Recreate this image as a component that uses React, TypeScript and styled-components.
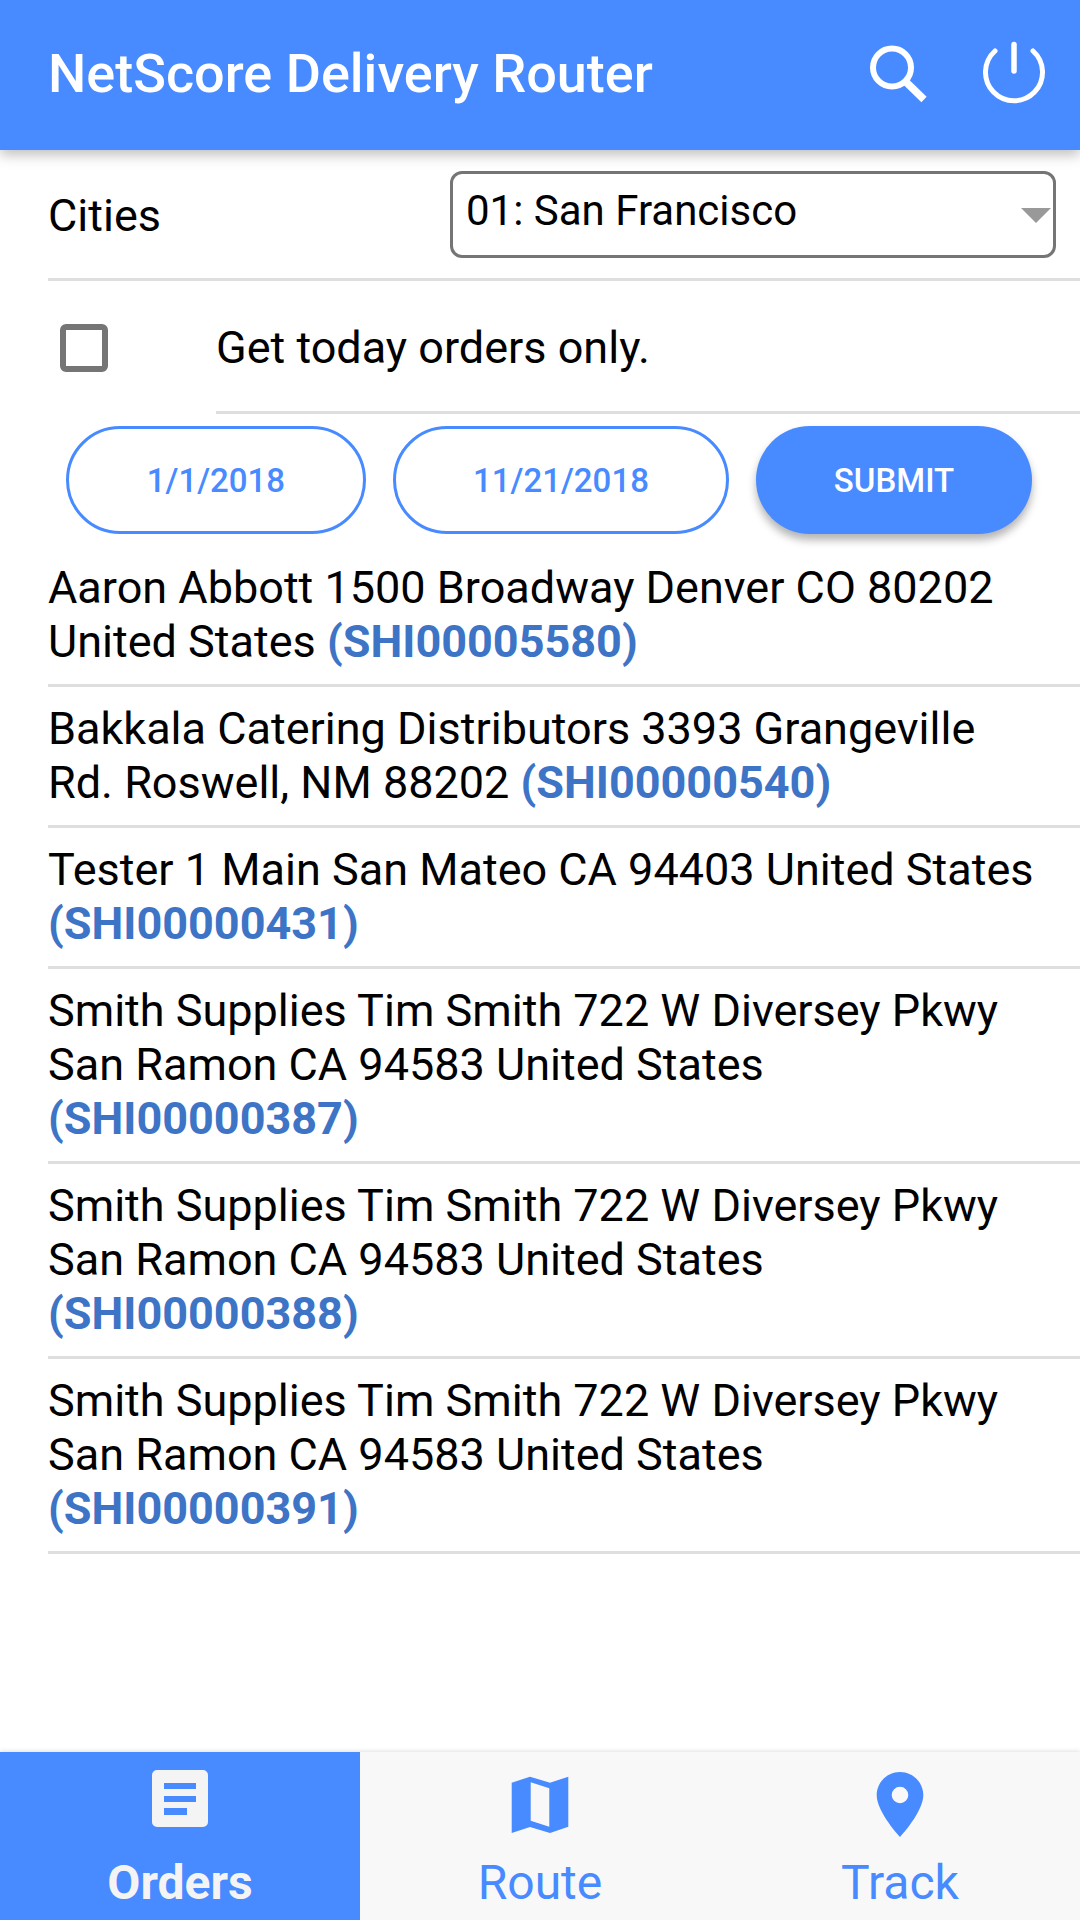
import React from 'react';
import styled, { createGlobalStyle } from 'styled-components';

const GlobalStyle = createGlobalStyle`
  html, body {
    margin: 0;
    padding: 0;
    background: #fff;
  }
  * {
    box-sizing: border-box;
  }
`;

const BLUE = '#488aff';

const Page = styled.div`
  width: 1080px;
  height: 1920px;
  display: flex;
  flex-direction: column;
  font-family: Roboto, 'Liberation Sans', sans-serif;
  font-size: 45px;
  color: #000;
  overflow: hidden;
`;

const Header = styled.header`
  height: 150px;
  flex: none;
  background: ${BLUE};
  color: #fff;
  display: flex;
  align-items: center;
  padding: 0 33px 0 48px;
  box-shadow: 0 5px 12px rgba(0, 0, 0, 0.25);
  position: relative;
  z-index: 1;
`;

const Title = styled.h1`
  flex: 1;
  margin: 0 0 3px;
  font-size: 54px;
  font-weight: 500;
`;

const HeaderIcons = styled.div`
  display: flex;
  align-items: center;
  gap: 51px;
  margin-bottom: 4px;
`;

const IconLine = styled.svg`
  fill: none;
  stroke: currentColor;
`;

const Content = styled.main`
  flex: 1;
  min-height: 0;
`;

const CityRow = styled.div`
  height: 131px;
  margin-left: 48px;
  border-bottom: 3px solid #dedede;
  display: flex;
  align-items: center;
  justify-content: space-between;
  padding: 0 24px 0 0;
`;

const CityLabel = styled.span`
  margin-top: 3px;
`;

const Select = styled.div`
  width: 606px;
  height: 87px;
  border: 3px solid #757575;
  border-radius: 12px;
  padding: 0 13px 8px;
  font-size: 42px;
  display: flex;
  align-items: center;
  justify-content: space-between;
`;

const Caret = styled.span`
  width: 0;
  height: 0;
  border-left: 15px solid transparent;
  border-right: 15px solid transparent;
  border-top: 15px solid #999;
  margin: 10px -11px 0 0;
`;

const CheckRow = styled.div`
  height: 133px;
  display: flex;
  padding-left: 60px;
`;

const CheckBox = styled.span`
  width: 48px;
  height: 48px;
  flex: none;
  border: 6px solid #757575;
  border-radius: 6px;
  margin-top: 43px;
`;

const CheckLabel = styled.div`
  flex: 1;
  margin-left: 108px;
  border-bottom: 3px solid #dedede;
  padding-top: 40px;
`;

const Buttons = styled.div`
  display: flex;
  gap: 27px;
  padding: 12px 0 0 66px;
  height: 132px;
`;

const DateButton = styled.button<{ $width: number }>`
  width: ${(p) => p.$width}px;
  height: 108px;
  border: 3px solid ${BLUE};
  border-radius: 54px;
  background: #fff;
  color: ${BLUE};
  font-family: inherit;
  font-size: 33px;
  font-weight: 500;
  padding: 0;
`;

const SubmitButton = styled(DateButton)`
  border: none;
  background: ${BLUE};
  color: #fff;
  box-shadow: 0 6px 9px rgba(0, 0, 0, 0.3);
`;

const OrderList = styled.ul`
  list-style: none;
  margin: 0;
  padding: 0 0 0 48px;
`;

const OrderRow = styled.li`
  padding: 15px 45px 15px 0;
  line-height: 54px;
  border-bottom: 3px solid #dedede;
`;

const ShipId = styled.b`
  color: #3d74c6;
  font-weight: 700;
`;

const TabBar = styled.nav`
  height: 168px;
  flex: none;
  display: flex;
  background: #f8f8f8;
  box-shadow: 0 -1px 4px rgba(0, 0, 0, 0.12);
`;

const Tab = styled.div<{ $active?: boolean }>`
  width: 360px;
  display: flex;
  flex-direction: column;
  align-items: center;
  font-size: 48px;
  background: ${(p) => (p.$active ? BLUE : 'transparent')};
  color: ${(p) => (p.$active ? '#f4f4f4' : BLUE)};
  font-weight: ${(p) => (p.$active ? 700 : 400)};
`;

const TabIcon = styled.svg`
  width: 72px;
  height: 72px;
  margin-top: 10px;
  fill: currentColor;
  overflow: visible;
`;

const TabLabel = styled.span`
  margin-top: 21px;
  line-height: 56px;
`;

const orders = [
  { text: 'Aaron Abbott 1500 Broadway Denver CO 80202 United States', id: 'SHI00005580' },
  { text: 'Bakkala Catering Distributors 3393 Grangeville Rd. Roswell, NM 88202', id: 'SHI00000540' },
  { text: 'Tester 1 Main San Mateo CA 94403 United States', id: 'SHI00000431' },
  { text: 'Smith Supplies Tim Smith 722 W Diversey Pkwy San Ramon CA 94583 United States', id: 'SHI00000387' },
  { text: 'Smith Supplies Tim Smith 722 W Diversey Pkwy San Ramon CA 94583 United States', id: 'SHI00000388' },
  { text: 'Smith Supplies Tim Smith 722 W Diversey Pkwy San Ramon CA 94583 United States', id: 'SHI00000391' },
];

export default function App(): JSX.Element {
  return (
    <Page>
      <GlobalStyle />
      <Header>
        <Title>NetScore Delivery Router</Title>
        <HeaderIcons>
          <IconLine width={60} height={60} viewBox='0 0 60 60'>
            <circle cx='22' cy='24.5' r='19' strokeWidth='6' />
            <path d='M35 38 L54 56.500' strokeWidth='7.500' />
          </IconLine>
          <IconLine width={66} height={66} viewBox='0 0 66 66' strokeLinecap='round'>
            <path d='M14 11 A28.500 28.500 0 1 0 52 11' strokeWidth='5' />
            <path d='M33 4.500 V31' strokeWidth='5.500' />
          </IconLine>
        </HeaderIcons>
      </Header>
      <Content>
        <CityRow>
          <CityLabel>Cities</CityLabel>
          <Select>
            <span>01: San Francisco</span>
            <Caret />
          </Select>
        </CityRow>
        <CheckRow>
          <CheckBox />
          <CheckLabel>Get today orders only.</CheckLabel>
        </CheckRow>
        <Buttons>
          <DateButton $width={300}>1/1/2018</DateButton>
          <DateButton $width={336}>11/21/2018</DateButton>
          <SubmitButton $width={276}>SUBMIT</SubmitButton>
        </Buttons>
        <OrderList>
          {orders.map((o) => (
            <OrderRow key={o.id}>
              {o.text} <ShipId>({o.id})</ShipId>
            </OrderRow>
          ))}
        </OrderList>
      </Content>
      <TabBar>
        <Tab $active>
          <TabIcon viewBox='0 0 72 72'>
            <path
              fillRule='evenodd'
              d='M13 8h46a5 5 0 0 1 5 5v47a5 5 0 0 1-5 5H13a5 5 0 0 1-5-5V13a5 5 0 0 1 5-5zm7 13v6h32v-6H20zm0 13v6h32v-6H20zm0 12v7h23v-7H20z'
            />
          </TabIcon>
          <TabLabel>Orders</TabLabel>
        </Tab>
        <Tab>
          <TabIcon viewBox='0 0 72 72'>
            <path
              fillRule='evenodd'
              d='M7.700 20.700 26 14.700 46 20.700 64.300 14.700V64.700L46 71 26 65 7.700 71V20.700zM26.700 20.300V58.700L45.300 64.700V26.300L26.700 20.300z'
            />
          </TabIcon>
          <TabLabel>Route</TabLabel>
        </Tab>
        <Tab>
          <TabIcon viewBox='0 0 72 72'>
            <path
              fillRule='evenodd'
              d='M36 10C23 10 12.700 20.400 12.700 33.300 12.700 50 36 75 36 75S59.300 50 59.300 33.300C59.300 20.400 49 10 36 10zm0 14.700a8.300 8.300 0 1 1 0 16.600 8.300 8.300 0 0 1 0-16.600z'
            />
          </TabIcon>
          <TabLabel>Track</TabLabel>
        </Tab>
      </TabBar>
    </Page>
  );
}
